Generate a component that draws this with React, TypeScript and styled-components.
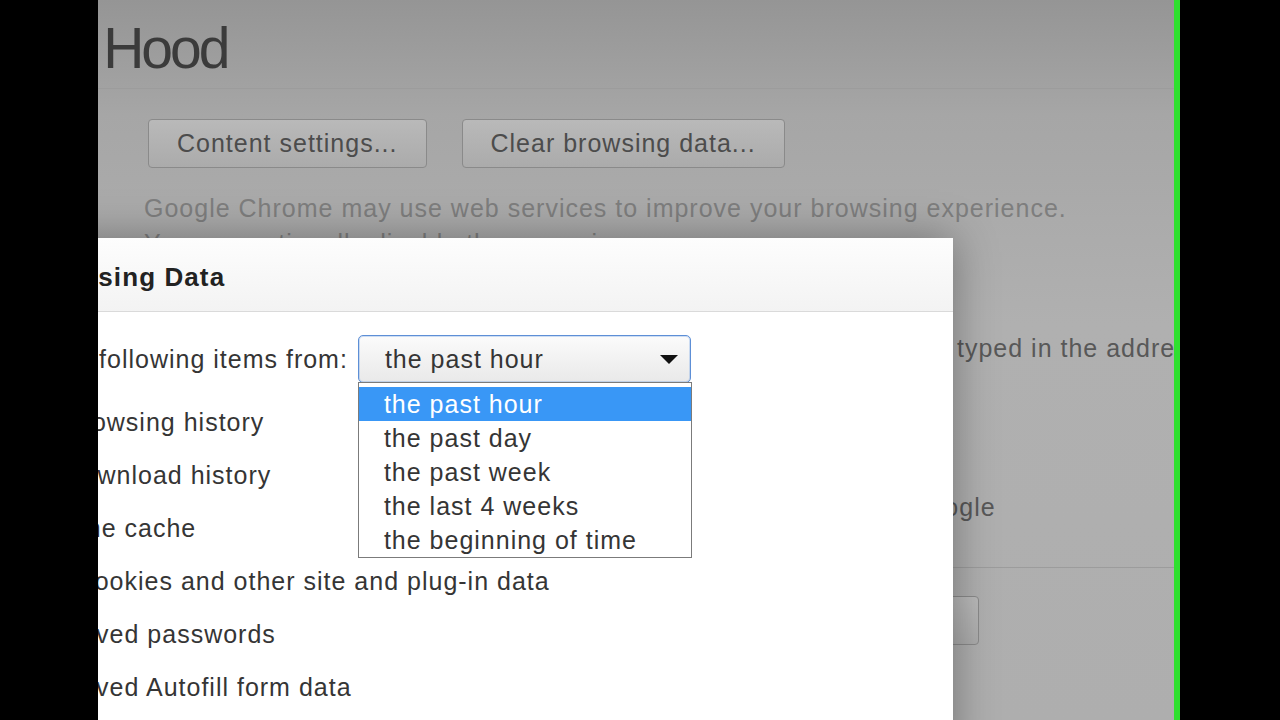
import { FC } from 'react';
import styled, { createGlobalStyle } from 'styled-components';

const FONT = `'Liberation Sans', Arial, sans-serif`;
const EDGE = 98;

const GlobalStyle = createGlobalStyle`
  html, body {
    margin: 0;
    padding: 0;
    background: #000;
    overflow: hidden;
  }
`;

const Frame = styled.div`
  display: flex;
  width: 1280px;
  height: 720px;
  background: #000;
  font-family: ${FONT};
`;

const BlackBar = styled.div<{ $w: number }>`
  flex: none;
  width: ${(p) => p.$w}px;
  background: #000;
`;

const GreenEdge = styled.div`
  flex: none;
  width: 6px;
  background: #2fe02f;
`;

const Viewport = styled.div`
  position: relative;
  flex: 1;
  height: 720px;
  overflow: hidden;
  background: linear-gradient(180deg, #959595 0%, #a6a6a6 16%, #b0b0b0 45%, #aeaeae 100%);
`;

const Page = styled.div`
  padding: 20px 0 0 46px;
  white-space: nowrap;
`;

const Heading = styled.h1`
  margin: 0 0 11px -277px;
  font: 400 57px/57px ${FONT};
  letter-spacing: -3px;
  color: #3b3b3b;
`;

const Divider = styled.div`
  height: 1px;
  margin-left: -46px;
  background: #9c9c9c;
`;

const ButtonRow = styled.div`
  display: flex;
  gap: 35px;
  margin: 30px 0 0 4px;
`;

const PageButton = styled.button<{ $offset?: number }>`
  box-sizing: border-box;
  height: 49px;
  margin-left: ${(p) => p.$offset ?? 0}px;
  padding: 0 28px;
  border: 1px solid #8a8a8a;
  border-radius: 4px;
  background: linear-gradient(180deg, #b9b9b9, #ababab);
  font: 400 25px ${FONT};
  letter-spacing: 1px;
  color: #4c4c4c;
`;

const Description = styled.p`
  margin: 23px 0 0;
  font-size: 25px;
  line-height: 35px;
  letter-spacing: 1px;
  color: #7e7e7e;
`;

const OptionList = styled.div`
  margin-top: 8px;
`;

const OptionRow = styled.div`
  display: flex;
  align-items: center;
  gap: 12px;
  height: 53px;
  font-size: 25px;
  letter-spacing: 1px;
  color: #585858;
`;

const Box = styled.span`
  flex: none;
  width: 18px;
  height: 18px;
  border: 1px solid #8a8a8a;
  border-radius: 2px;
  background: #b4b4b4;
`;

const Lead = styled.span<{ $w: number }>`
  flex: none;
  width: ${(p) => p.$w}px;
  overflow: hidden;
`;

const SectionDivider = styled(Divider)`
  margin-top: 33px;
`;

const LowerRow = styled.div`
  display: flex;
  margin-top: 28px;
`;

/* dialog */

const Dialog = styled.div`
  position: absolute;
  left: -191px;
  top: 238px;
  width: 1046px;
  height: 520px;
  background: #fff;
  box-shadow: 0 0 40px rgba(0, 0, 0, 0.35);
  white-space: nowrap;
  color: #353535;
`;

const DialogHeader = styled.div`
  box-sizing: border-box;
  display: flex;
  align-items: center;
  height: 74px;
  padding: 5px 0 0 43px;
  border-bottom: 1px solid #dadada;
  background: linear-gradient(180deg, #fdfdfd, #f3f3f3);
`;

const DialogTitle = styled.h2`
  margin: 0;
  font: 700 26px ${FONT};
  letter-spacing: 1.1px;
  color: #222;
`;

const DialogBody = styled.div`
  padding: 23px 0 0 20px;
  font-size: 25px;
  letter-spacing: 1px;
`;

const RangeRow = styled.div`
  display: flex;
  align-items: center;
  gap: 10px;
  height: 48px;
`;

const Select = styled.div`
  position: relative;
  box-sizing: border-box;
  display: flex;
  align-items: center;
  justify-content: space-between;
  width: 333px;
  height: 48px;
  padding: 1px 12px 0 26px;
  border: 1px solid #5d8fd6;
  border-radius: 5px;
  background: linear-gradient(180deg, #fbfbfb, #e9e9e9);
  box-shadow: inset 0 0 0 1px rgba(120, 165, 230, 0.35);
`;

const Arrow = styled.span`
  width: 0;
  height: 0;
  border-left: 9px solid transparent;
  border-right: 9px solid transparent;
  border-top: 9px solid #111;
`;

const Menu = styled.ul`
  position: absolute;
  z-index: 2;
  top: 100%;
  left: -1px;
  box-sizing: border-box;
  width: 334px;
  margin: 0;
  padding: 4px 0 0;
  list-style: none;
  border: 1px solid #7b7b7b;
  background: #fff;
`;

const MenuItem = styled.li<{ $active?: boolean }>`
  height: 34px;
  padding-left: 25px;
  line-height: 34px;
  background: ${(p) => (p.$active ? '#3997f6' : 'transparent')};
  color: ${(p) => (p.$active ? '#fff' : '#353535')};
`;

const ItemList = styled.div`
  margin-top: 13px;
`;

const ItemRow = styled.label`
  display: flex;
  align-items: center;
  gap: 15px;
  height: 53px;
  padding-left: 33px;
`;

const Check = styled.span`
  flex: none;
  width: 18px;
  height: 18px;
  border: 1px solid #7b7b7b;
  border-radius: 2px;
  background: linear-gradient(180deg, #fff, #e6e6e6);
`;

const RANGES = ['the past hour', 'the past day', 'the past week', 'the last 4 weeks', 'the beginning of time'];

const ITEMS = [
  'Clear browsing history',
  'Clear download history',
  'Empty the cache',
  'Delete cookies and other site and plug-in data',
  'Clear saved passwords',
  'Clear saved Autofill form data',
];

const App: FC = () => (
  <Frame>
    <GlobalStyle />
    <BlackBar $w={EDGE} />
    <Viewport>
      <Page>
        <Heading>Under the Hood</Heading>
        <Divider />
        <ButtonRow>
          <PageButton>Content settings...</PageButton>
          <PageButton>Clear browsing data...</PageButton>
        </ButtonRow>
        <Description>
          Google Chrome may use web services to improve your browsing experience.
          <br />
          You can optionally disable these services.
        </Description>
        <OptionList>
          <OptionRow>
            <Box />
            Use a web service to help resolve navigation errors
          </OptionRow>
          <OptionRow>
            <Box />
            <Lead $w={769}>Use a suggestion service to help complete searches and URLs</Lead>
            typed in the address bar
          </OptionRow>
          <OptionRow>
            <Box />
            Use DNS pre-fetching to improve page load
          </OptionRow>
          <OptionRow>
            <Box />
            Enable phishing and malware protection
          </OptionRow>
          <OptionRow>
            <Box />
            <Lead $w={721}>Automatically send usage statistics and crash reports to</Lead>
            Google
          </OptionRow>
        </OptionList>
        <SectionDivider />
        <LowerRow>
          <PageButton $offset={483}>Change proxy settings...</PageButton>
        </LowerRow>
      </Page>

      <Dialog>
        <DialogHeader>
          <DialogTitle>Clear Browsing Data</DialogTitle>
        </DialogHeader>
        <DialogBody>
          <RangeRow>
            <span>Obliterate the following items from:</span>
            <Select>
              <span>the past hour</span>
              <Arrow />
              <Menu>
                {RANGES.map((r, i) => (
                  <MenuItem key={r} $active={i === 0}>
                    {r}
                  </MenuItem>
                ))}
              </Menu>
            </Select>
          </RangeRow>
          <ItemList>
            {ITEMS.map((item) => (
              <ItemRow key={item}>
                <Check />
                {item}
              </ItemRow>
            ))}
          </ItemList>
        </DialogBody>
      </Dialog>
    </Viewport>
    <GreenEdge />
    <BlackBar $w={100} />
  </Frame>
);

export default App;
